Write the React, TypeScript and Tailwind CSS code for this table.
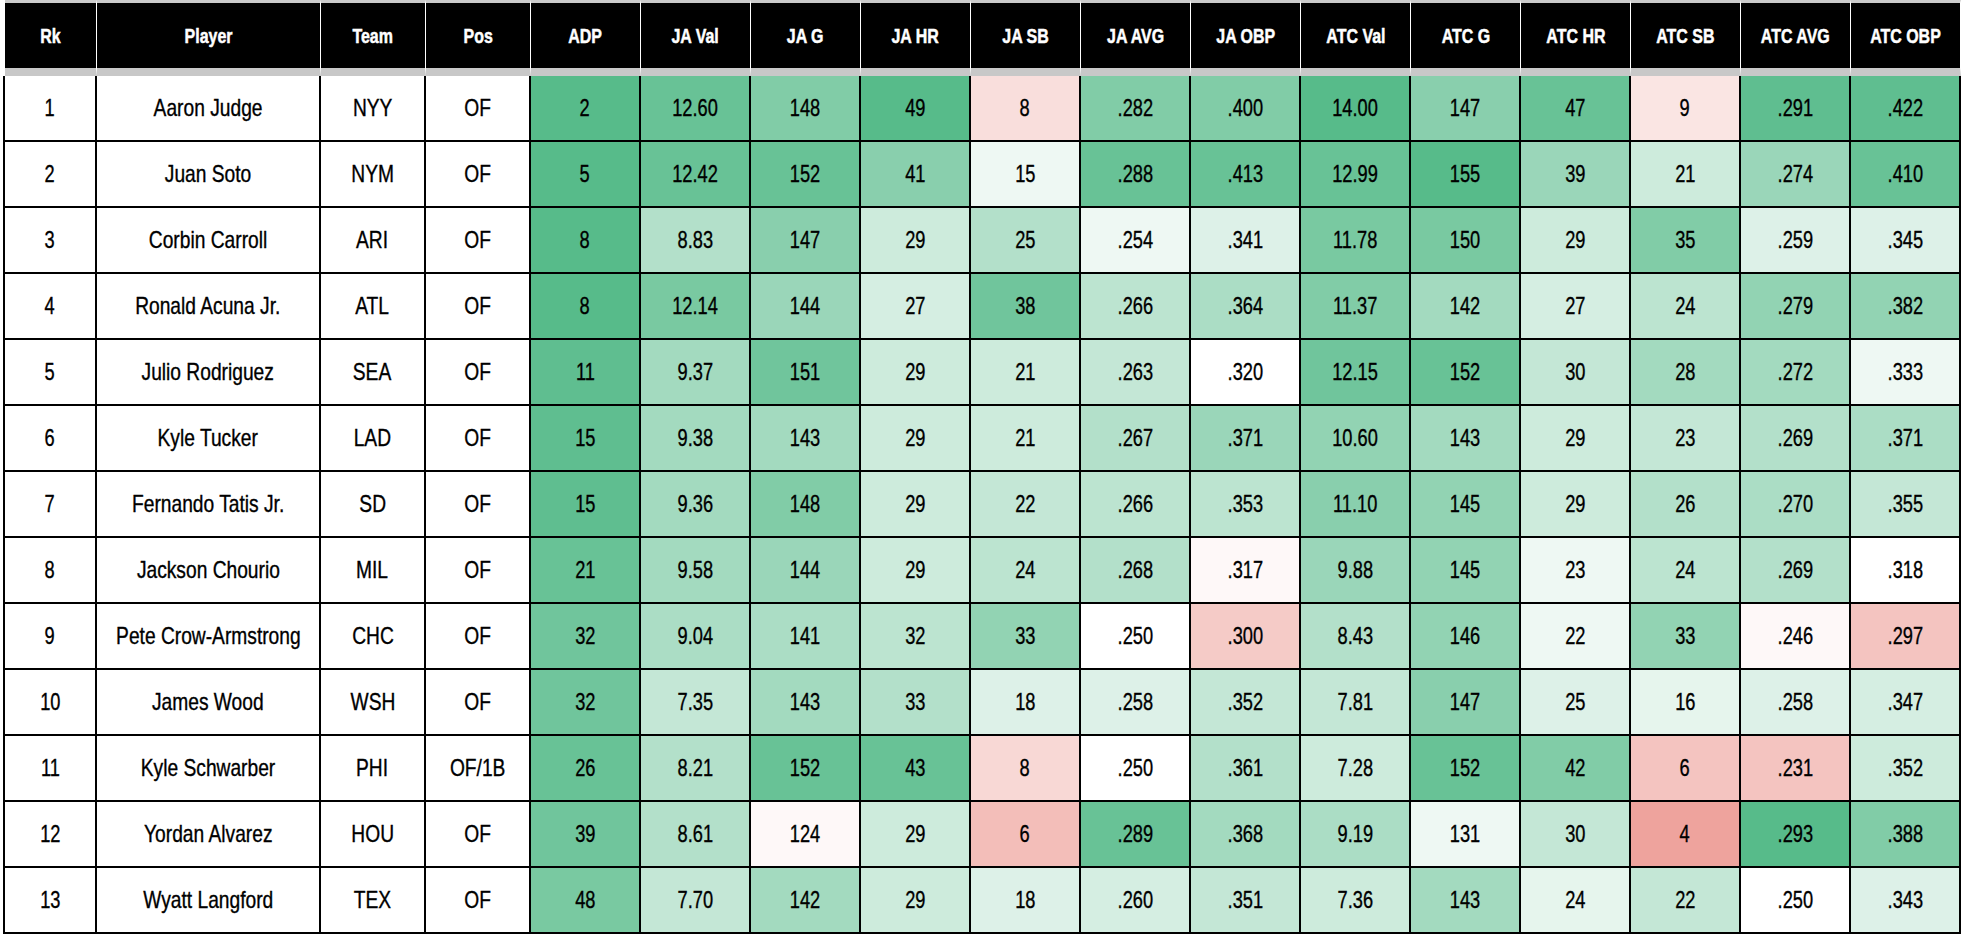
import React from 'react';

// heat scale, 0 = white, 20 = full green / red (Sheets default colour scale)
const GREEN = [
  'bg-white', 'bg-[#f7fcf9]', 'bg-[#eef8f3]', 'bg-[#e6f5ed]', 'bg-[#ddf1e8]', 'bg-[#d5eee2]',
  'bg-[#cdebdc]', 'bg-[#c4e7d6]', 'bg-[#bce4d0]', 'bg-[#b3e0ca]', 'bg-[#abddc5]', 'bg-[#a3dabf]',
  'bg-[#9ad6b9]', 'bg-[#92d3b3]', 'bg-[#89cfad]', 'bg-[#81cca7]', 'bg-[#79c9a1]', 'bg-[#70c59c]',
  'bg-[#68c296]', 'bg-[#5fbe90]', 'bg-[#57bb8a]',
];
const RED = [
  'bg-white', 'bg-[#fef8f8]', 'bg-[#fdf2f1]', 'bg-[#fbebea]', 'bg-[#fae5e3]', 'bg-[#f9dedc]',
  'bg-[#f8d8d5]', 'bg-[#f6d1ce]', 'bg-[#f5cbc7]', 'bg-[#f4c4c0]', 'bg-[#f3beb9]', 'bg-[#f1b7b2]',
  'bg-[#f0b0ab]', 'bg-[#efaaa4]', 'bg-[#eea39d]',
];

const heat = (lvl: number) => (lvl >= 0 ? GREEN[lvl] : RED[-lvl]);

const headers = [
  'Rk', 'Player', 'Team', 'Pos', 'ADP', 'JA Val', 'JA G', 'JA HR', 'JA SB', 'JA AVG', 'JA OBP',
  'ATC Val', 'ATC G', 'ATC HR', 'ATC SB', 'ATC AVG', 'ATC OBP',
];

type Row = { name: string; team: string; pos: string; stats: [string, number][] };

const rows: Row[] = [
  { name: 'Aaron Judge', team: 'NYY', pos: 'OF', stats: [['2', 20], ['12.60', 18], ['148', 15], ['49', 20], ['8', -5], ['.282', 15], ['.400', 15], ['14.00', 20], ['147', 14], ['47', 18], ['9', -4], ['.291', 19], ['.422', 19]] },
  { name: 'Juan Soto', team: 'NYM', pos: 'OF', stats: [['5', 20], ['12.42', 18], ['152', 18], ['41', 14], ['15', 2], ['.288', 18], ['.413', 18], ['12.99', 18], ['155', 20], ['39', 12], ['21', 6], ['.274', 12], ['.410', 18]] },
  { name: 'Corbin Carroll', team: 'ARI', pos: 'OF', stats: [['8', 20], ['8.83', 9], ['147', 14], ['29', 6], ['25', 9], ['.254', 2], ['.341', 4], ['11.78', 16], ['150', 16], ['29', 6], ['35', 15], ['.259', 4], ['.345', 4]] },
  { name: 'Ronald Acuna Jr.', team: 'ATL', pos: 'OF', stats: [['8', 20], ['12.14', 16], ['144', 12], ['27', 5], ['38', 17], ['.266', 8], ['.364', 10], ['11.37', 15], ['142', 11], ['27', 5], ['24', 8], ['.279', 13], ['.382', 13]] },
  { name: 'Julio Rodriguez', team: 'SEA', pos: 'OF', stats: [['11', 19], ['9.37', 11], ['151', 17], ['29', 6], ['21', 6], ['.263', 7], ['.320', 0], ['12.15', 17], ['152', 18], ['30', 7], ['28', 11], ['.272', 11], ['.333', 2]] },
  { name: 'Kyle Tucker', team: 'LAD', pos: 'OF', stats: [['15', 19], ['9.38', 11], ['143', 11], ['29', 6], ['21', 6], ['.267', 9], ['.371', 12], ['10.60', 13], ['143', 11], ['29', 6], ['23', 7], ['.269', 9], ['.371', 10]] },
  { name: 'Fernando Tatis Jr.', team: 'SD', pos: 'OF', stats: [['15', 19], ['9.36', 11], ['148', 15], ['29', 6], ['22', 7], ['.266', 8], ['.353', 8], ['11.10', 14], ['145', 13], ['29', 6], ['26', 9], ['.270', 10], ['.355', 7]] },
  { name: 'Jackson Chourio', team: 'MIL', pos: 'OF', stats: [['21', 18], ['9.58', 11], ['144', 12], ['29', 6], ['24', 8], ['.268', 9], ['.317', -1], ['9.88', 12], ['145', 13], ['23', 2], ['24', 8], ['.269', 9], ['.318', 0]] },
  { name: 'Pete Crow-Armstrong', team: 'CHC', pos: 'OF', stats: [['32', 17], ['9.04', 10], ['141', 10], ['32', 8], ['33', 13], ['.250', 0], ['.300', -8], ['8.43', 9], ['146', 13], ['22', 2], ['33', 13], ['.246', -1], ['.297', -9]] },
  { name: 'James Wood', team: 'WSH', pos: 'OF', stats: [['32', 17], ['7.35', 7], ['143', 11], ['33', 9], ['18', 4], ['.258', 4], ['.352', 7], ['7.81', 7], ['147', 14], ['25', 4], ['16', 3], ['.258', 4], ['.347', 5]] },
  { name: 'Kyle Schwarber', team: 'PHI', pos: 'OF/1B', stats: [['26', 18], ['8.21', 9], ['152', 18], ['43', 18], ['8', -6], ['.250', 0], ['.361', 9], ['7.28', 6], ['152', 18], ['42', 15], ['6', -9], ['.231', -9], ['.352', 6]] },
  { name: 'Yordan Alvarez', team: 'HOU', pos: 'OF', stats: [['39', 17], ['8.61', 9], ['124', -1], ['29', 6], ['6', -10], ['.289', 18], ['.368', 11], ['9.19', 10], ['131', 2], ['30', 7], ['4', -14], ['.293', 20], ['.388', 15]] },
  { name: 'Wyatt Langford', team: 'TEX', pos: 'OF', stats: [['48', 16], ['7.70', 7], ['142', 11], ['29', 6], ['18', 4], ['.260', 5], ['.351', 7], ['7.36', 6], ['143', 11], ['24', 3], ['22', 7], ['.250', 0], ['.343', 4]] },
];

const cols = 'grid grid-cols-[92px_224px_105px_105px_repeat(13,110px)]';

export default function App() {
  return (
    <div className="min-h-screen bg-white pl-[3px] font-['Liberation_Sans',Arial,sans-serif] text-black">
      {/* header */}
      <div className={`${cols} border-l-2 border-white`}>
        {headers.map(h => (
          <div
            key={h}
            className="h-[76px] flex items-center justify-center bg-black text-white text-[21px] font-bold border-t-[3px] border-b-[8px] border-t-[#cccccc] border-b-[#c8c8c8] border-r border-r-white"
          >
            {/* narrow face: Liberation squeezed to a condensed width */}
            <span className="inline-block whitespace-nowrap scale-x-76 [-webkit-text-stroke:0.5px_white]">{h}</span>
          </div>
        ))}
      </div>

      {/* body */}
      {rows.map((r, i) => (
        <div key={r.name} className={`${cols} border-l-2 border-black`}>
          <Cell>{i + 1}</Cell>
          <Cell wide>{r.name}</Cell>
          <Cell wide>{r.team}</Cell>
          <Cell wide>{r.pos}</Cell>
          {r.stats.map(([v, lvl], j) => (
            <Cell key={j} bg={heat(lvl)}>{v}</Cell>
          ))}
        </div>
      ))}
    </div>
  );
}

function Cell({ children, bg = 'bg-white', wide = false }: { children: React.ReactNode; bg?: string; wide?: boolean }) {
  return (
    <div className={`h-[66px] flex items-center justify-center text-[24px] border-r-2 border-b-2 border-black ${bg}`}>
      <span className={`inline-block whitespace-nowrap [-webkit-text-stroke:0.35px_black] ${wide ? 'scale-x-80' : 'scale-x-76'}`}>
        {children}
      </span>
    </div>
  );
}
